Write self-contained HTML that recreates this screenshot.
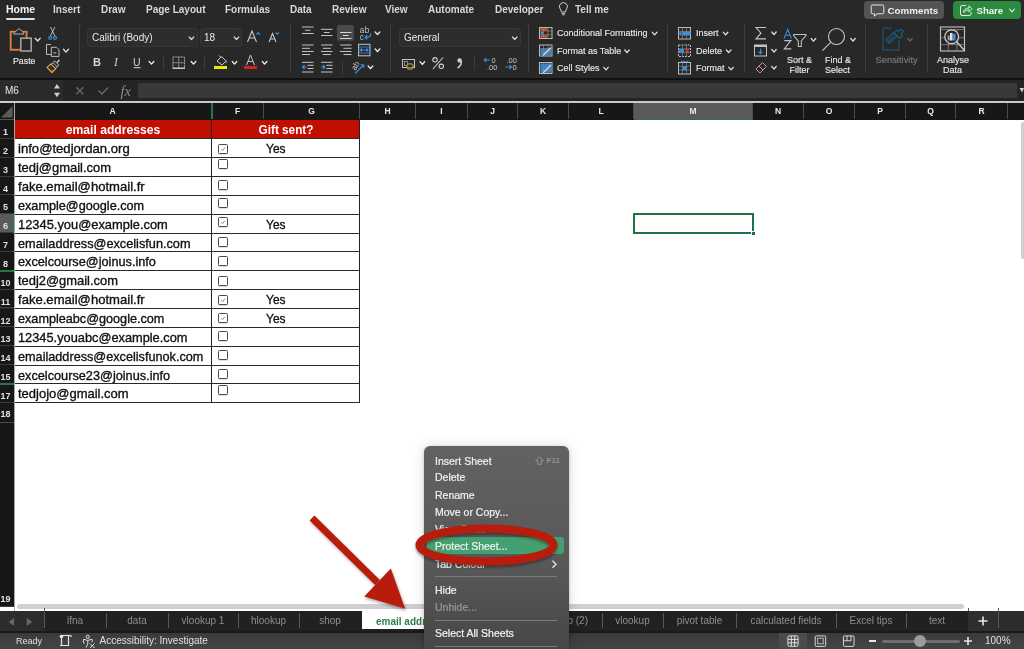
<!DOCTYPE html>
<html><head><meta charset="utf-8">
<style>
*{margin:0;padding:0;box-sizing:border-box}
html,body{width:1024px;height:649px;overflow:hidden;background:#282828;font-family:"Liberation Sans",sans-serif;position:relative}
body{will-change:transform}
.a{position:absolute;white-space:pre}
.tab{position:absolute;top:4px;font-size:10px;font-weight:700;color:#d8d8d8;line-height:12px}
.rb{position:absolute;background:#3d3d3d;width:1px}
.chev{position:absolute;width:5px;height:5px;border-right:1.3px solid #ddd;border-bottom:1.3px solid #ddd;transform:rotate(45deg)}
.lbl{position:absolute;font-size:9px;color:#e6e6e6;line-height:10px;white-space:pre;-webkit-text-stroke:0.15px currentColor}
.colh{position:absolute;top:103px;height:16px;background:#171717;border-right:1px solid #4a4a4a;color:#e8e8e8;font-size:8.5px;font-weight:700;text-align:center;line-height:16px}
.rowh{position:absolute;left:0;width:14px;background:#171717;border-bottom:1px solid #3c3c3c}
.rnum{position:absolute;left:0;width:11px;text-align:center;font-size:9px;font-weight:700;color:#e0e0e0;line-height:10px}
.cell{position:absolute;font-size:13px;color:#111;line-height:15px;white-space:pre;-webkit-text-stroke:0.35px #111}
.cb{position:absolute;left:218px;width:10.3px;height:10px;border:1px solid #4a4a4a;border-radius:1.5px;background:#fff;box-shadow:0 0.5px 0.5px rgba(0,0,0,.25)}
.hl{position:absolute;left:14px;width:346px;height:1px;background:#2a2a2a}
.st{position:absolute;top:611px;height:20px;color:#8e8e8e;font-size:10px;text-align:center;line-height:20px;white-space:pre}
.mi{position:absolute;left:435px;font-size:10.5px;color:#f0f0f0;line-height:12px;white-space:pre;-webkit-text-stroke:0.2px currentColor}
</style></head><body>
<!-- top tab bar -->
<div class="tab" style="left:6px;top:3px;color:#f2f2f2;font-size:10.5px">Home</div>
<div class="a" style="left:6px;top:17.5px;width:29px;height:2px;background:#e0e0e0;border-radius:1px"></div>
<div class="tab" style="left:53px">Insert</div>
<div class="tab" style="left:101px">Draw</div>
<div class="tab" style="left:146px">Page Layout</div>
<div class="tab" style="left:225px">Formulas</div>
<div class="tab" style="left:290px">Data</div>
<div class="tab" style="left:332px">Review</div>
<div class="tab" style="left:385px">View</div>
<div class="tab" style="left:428px">Automate</div>
<div class="tab" style="left:495px">Developer</div>
<div class="tab" style="left:575px">Tell me</div>

<!-- Comments / Share -->
<div class="a" style="left:864px;top:1px;width:80px;height:18px;background:#535353;border-radius:4px"></div>
<div class="a" style="left:887.5px;top:4.5px;font-size:9.8px;font-weight:700;color:#efefef;line-height:12px">Comments</div>
<div class="a" style="left:953px;top:1px;width:68px;height:18px;background:#2b8a3e;border-radius:4px"></div>
<div class="a" style="left:976.5px;top:4.5px;font-size:9.6px;font-weight:700;color:#f4f4f4;line-height:12px">Share</div>

<!-- ribbon separators -->
<div class="rb" style="left:79px;top:24px;height:49px"></div>
<div class="rb" style="left:290px;top:24px;height:49px"></div>
<div class="rb" style="left:390px;top:24px;height:49px"></div>
<div class="rb" style="left:528px;top:24px;height:49px"></div>
<div class="rb" style="left:667px;top:24px;height:49px"></div>
<div class="rb" style="left:744px;top:24px;height:49px"></div>
<div class="rb" style="left:865px;top:24px;height:49px"></div>
<div class="rb" style="left:927px;top:24px;height:49px"></div>

<!-- ribbon labels -->
<div class="lbl" style="left:13px;top:55.5px;font-size:8.8px">Paste</div>
<div class="a" style="left:87px;top:28px;width:111px;height:19px;background:#2d2d2d;border:1px solid #363636;border-radius:3px"></div>
<div class="a" style="left:92px;top:33px;font-size:10px;color:#e8e8e8;line-height:10px">Calibri (Body)</div>
<div class="a" style="left:200px;top:28px;width:42px;height:19px;background:#2d2d2d;border:1px solid #363636;border-radius:3px"></div>
<div class="a" style="left:204px;top:33px;font-size:10px;color:#e8e8e8;line-height:10px">18</div>
<div class="a" style="left:399px;top:28px;width:122px;height:19px;background:#2d2d2d;border:1px solid #363636;border-radius:3px"></div>
<div class="a" style="left:404px;top:32.7px;font-size:10px;color:#e8e8e8;line-height:10px">General</div>
<div class="lbl" style="left:557px;top:28px">Conditional Formatting</div>
<div class="lbl" style="left:557px;top:46px">Format as Table</div>
<div class="lbl" style="left:557px;top:63px">Cell Styles</div>
<div class="lbl" style="left:696px;top:28px">Insert</div>
<div class="lbl" style="left:696px;top:46px">Delete</div>
<div class="lbl" style="left:696px;top:63px">Format</div>
<div class="lbl" style="left:787px;top:55px">Sort &amp;</div>
<div class="lbl" style="left:789.5px;top:64.7px">Filter</div>
<div class="lbl" style="left:825px;top:55.3px">Find &amp;</div>
<div class="lbl" style="left:825px;top:64.7px">Select</div>
<div class="lbl" style="left:875.5px;top:55.3px;color:#7a7a7a;font-size:9.4px">Sensitivity</div>
<div class="lbl" style="left:937px;top:55px">Analyse</div>
<div class="lbl" style="left:943px;top:64.7px">Data</div>

<!-- under ribbon -->
<div class="a" style="left:0;top:78px;width:1024px;height:2px;background:#121212"></div>
<!-- formula bar -->
<div class="a" style="left:0;top:80px;width:1024px;height:21px;background:#242424"></div>
<div class="a" style="left:0;top:80px;width:63px;height:21px;background:#2a2a2a"></div>
<div class="a" style="left:5px;top:85px;font-size:10px;color:#e6e6e6;line-height:11px">M6</div>
<div class="a" style="left:138px;top:83px;width:879px;height:15px;background:#393939;border-radius:2px 0 0 2px"></div>
<svg class="a" style="left:1018px;top:86px" width="6" height="8"><polygon points="1.5,2 6,2 4,6.5" fill="#cfcfcf"/></svg>
<div class="a" style="left:0;top:101px;width:1024px;height:2px;background:#c9c9c9"></div>

<!-- column headers -->
<div class="a" style="left:0;top:103px;width:1024px;height:17px;background:#171717"></div>
<div class="colh" style="left:14px;width:198px">A</div>
<div class="colh" style="left:212px;width:52px">F</div>
<div class="colh" style="left:264px;width:96px">G</div>
<div class="colh" style="left:360px;width:56px">H</div>
<div class="colh" style="left:416px;width:52px">I</div>
<div class="colh" style="left:468px;width:50px">J</div>
<div class="colh" style="left:518px;width:51px">K</div>
<div class="colh" style="left:569px;width:65px">L</div>
<div class="colh" style="left:634px;width:119px;background:#5a5a5a">M</div>
<div class="colh" style="left:753px;width:51px">N</div>
<div class="colh" style="left:804px;width:51px">O</div>
<div class="colh" style="left:855px;width:51px">P</div>
<div class="colh" style="left:906px;width:50px">Q</div>
<div class="colh" style="left:956px;width:52px">R</div>
<div class="a" style="left:634px;top:118.5px;width:119px;height:1.5px;background:#1f7a45"></div>
<div class="a" style="left:211px;top:103px;width:2px;height:16px;background:#1e7a45"></div>
<div class="a" style="left:0;top:103px;width:14px;height:17px;background:#171717"></div>

<svg class="a" style="left:0;top:0" width="1024" height="80"><path d="M561.3,12 q-0.3,-2 -1.3,-3.3 a4,4 0 1 1 6.8,0 q-1,1.3 -1.3,3.3 z" fill="none" stroke="#d0d0d0" stroke-width="1"/><path d="M561.6,13.6 h3.6 M562.2,14.8 h2.4" stroke="#d0d0d0" stroke-width="0.9"/><path d="M872.5,5 h10 a1.3,1.3 0 0 1 1.3,1.3 v6.2 a1.3,1.3 0 0 1 -1.3,1.3 h-5.5 l-2.5,2.3 v-2.3 h-2 a1.3,1.3 0 0 1 -1.3,-1.3 v-6.2 a1.3,1.3 0 0 1 1.3,-1.3 z" fill="none" stroke="#e8e8e8" stroke-width="1"/><path d="M966,5.5 h-4 a1.5,1.5 0 0 0 -1.5,1.5 v7 a1.5,1.5 0 0 0 1.5,1.5 h7.5 a1.5,1.5 0 0 0 1.5,-1.5 v-2" fill="none" stroke="#e8e8e8" stroke-width="1"/><path d="M963.5,12.5 q0.5,-4.5 5.5,-4.5 v-2.2 l3,3 l-3,3 v-2 q-3.5,0 -5.5,2.7 z" fill="none" stroke="#e8e8e8" stroke-width="1" stroke-linejoin="round"/><polyline points="1009.5,9.0 1012.0,11.8 1014.5,9.0" fill="none" stroke="#e8e8e8" stroke-width="1.1" stroke-linecap="round" stroke-linejoin="round"/><rect x="10.8" y="31.8" width="15.6" height="17.8" fill="none" stroke="#e8773a" stroke-width="1.6"/><rect x="10" y="31" width="17.2" height="19.4" fill="none" stroke="#d9b25a" stroke-width="0.5" opacity="0.6"/><path d="M13.5,34 h10.5 l-1.5,-2.5 l-3.5,-3 l-3.5,3 z" fill="#282828" stroke="#b0b0b0" stroke-width="1"/><rect x="20.8" y="38.2" width="10.4" height="12.8" fill="#282828" stroke="#a8a8a8" stroke-width="1.5"/><polyline points="35.2,38.2 37.7,41.0 40.2,38.2" fill="none" stroke="#e0e0e0" stroke-width="1.3" stroke-linecap="round" stroke-linejoin="round"/><path d="M50.5,27 L55,36.3 M54.8,27 L50.3,36.3" stroke="#c8c8c8" stroke-width="0.9" fill="none"/><circle cx="50.2" cy="37.8" r="1.5" fill="none" stroke="#3a8fd8" stroke-width="1.2"/><circle cx="55" cy="37.8" r="1.5" fill="none" stroke="#3a8fd8" stroke-width="1.2"/><path d="M50.8,54.5 h-4.3 v-10 h4.5" fill="none" stroke="#bdbdbd" stroke-width="1"/><path d="M51.3,47.3 h5.2 l2.5,2.5 v6.6 h-7.7 z" fill="none" stroke="#bdbdbd" stroke-width="1"/><rect x="53.3" y="52" width="3" height="1.6" fill="#888"/><polyline points="63.5,49.3 66.0,52.1 68.5,49.3" fill="none" stroke="#e0e0e0" stroke-width="1.3" stroke-linecap="round" stroke-linejoin="round"/><path d="M47,67.3 L52,72.6 L55.8,68.6 L51,63.8 Z" fill="#3a3020" stroke="#e8b24a" stroke-width="1.1" stroke-linejoin="round"/><path d="M51.3,64.2 L55.5,68.3 L58.8,65 L54.6,60.9 Z" fill="#282828" stroke="#c4c4c4" stroke-width="1"/><path d="M53,62.6 l4.2,4.1" stroke="#c4c4c4" stroke-width="0.8"/><path d="M57,62.5 l2.5,-2.5" stroke="#c4c4c4" stroke-width="1.6"/><circle cx="51.8" cy="70.3" r="0.9" fill="#e05030"/><polyline points="189.2,37.0 191.5,39.5 193.8,37.0" fill="none" stroke="#d8d8d8" stroke-width="1.2" stroke-linecap="round" stroke-linejoin="round"/><polyline points="234.2,37.0 236.5,39.5 238.8,37.0" fill="none" stroke="#d8d8d8" stroke-width="1.2" stroke-linecap="round" stroke-linejoin="round"/><text x="93" y="66" font-family="Liberation Sans" font-weight="700" font-size="11" fill="#d8d8d8">B</text><text x="114" y="66" font-family="Liberation Serif" font-style="italic" font-size="11.5" fill="#d0d0d0">I</text><text x="133" y="66" font-family="Liberation Sans" font-size="10.5" fill="#d0d0d0">U</text><rect x="133.5" y="67.2" width="7" height="1" fill="#d0d0d0"/><polyline points="149.2,61.5 151.5,64.1 153.8,61.5" fill="none" stroke="#e8e8e8" stroke-width="1.4" stroke-linecap="round" stroke-linejoin="round"/><rect x="163" y="56" width="1" height="14" fill="#3d3d3d"/><path d="M173,57 h11.5 v11.5 h-11.5 z M178.75,57 v11.5 M173,62.75 h11.5" fill="none" stroke="#bdbdbd" stroke-width="1" stroke-dasharray="1,0.6"/><rect x="172.6" y="67.5" width="12.4" height="1.4" fill="#d0d0d0"/><polyline points="191.2,61.5 193.5,64.1 195.8,61.5" fill="none" stroke="#e8e8e8" stroke-width="1.4" stroke-linecap="round" stroke-linejoin="round"/><rect x="204" y="56" width="1" height="14" fill="#3d3d3d"/><path d="M217,61 l4.5,-4.5 l4.5,4.5 l-4,4 z" fill="none" stroke="#c8c8c8" stroke-width="1"/><path d="M219,55.5 l2,2" stroke="#c8c8c8" stroke-width="1"/><path d="M225.5,60 q1.5,1.5 0.5,3" stroke="#3a8fd8" stroke-width="1.4" fill="none"/><rect x="214" y="66" width="13" height="3" fill="#f0e800"/><polyline points="232.3,61.5 234.6,64.1 236.8,61.5" fill="none" stroke="#e8e8e8" stroke-width="1.4" stroke-linecap="round" stroke-linejoin="round"/><path d="M246.5,65 l4,-10 l4,10 M248,61.5 h5" fill="none" stroke="#c8c8c8" stroke-width="1"/><rect x="244" y="66" width="13" height="3" fill="#d8201a"/><polyline points="262.4,61.5 264.6,64.1 266.9,61.5" fill="none" stroke="#e8e8e8" stroke-width="1.4" stroke-linecap="round" stroke-linejoin="round"/><path d="M247.5,42 l4.5,-11 l4.5,11 M249.3,38 h5.4" fill="none" stroke="#c8c8c8" stroke-width="1.1"/><polyline points="256.5,34.5 258.3,32.8 260.1,34.5" fill="none" stroke="#3a8fd8" stroke-width="1.1"/><path d="M269,42 l3.5,-8.5 l3.5,8.5 M270.4,39 h4.2" fill="none" stroke="#c8c8c8" stroke-width="1.1"/><polyline points="275.5,32.5 277.3,34.2 279.1,32.5" fill="none" stroke="#3a8fd8" stroke-width="1.1"/><rect x="302.0" y="26.5" width="11.5" height="1" fill="#c4c4c4"/><rect x="305.0" y="29.8" width="5.5" height="1" fill="#c4c4c4"/><rect x="302.0" y="33.0" width="11.5" height="1" fill="#c4c4c4"/><rect x="321.0" y="28.8" width="11.5" height="1" fill="#c4c4c4"/><rect x="324.0" y="32.0" width="5.5" height="1" fill="#c4c4c4"/><rect x="321.0" y="35.0" width="11.5" height="1" fill="#c4c4c4"/><rect x="337" y="25" width="17" height="15.7" rx="2" fill="#4a4a4a"/><rect x="340.0" y="32.0" width="11.5" height="1" fill="#d4d4d4"/><rect x="343.0" y="35.0" width="5.5" height="1" fill="#d4d4d4"/><rect x="340.0" y="38.0" width="11.5" height="1" fill="#d4d4d4"/><rect x="302.0" y="44.5" width="11.5" height="1" fill="#c4c4c4"/><rect x="302.0" y="47.8" width="8" height="1" fill="#c4c4c4"/><rect x="302.0" y="51.0" width="11.5" height="1" fill="#c4c4c4"/><rect x="302.0" y="54.0" width="8" height="1" fill="#c4c4c4"/><rect x="321.0" y="44.5" width="11.5" height="1" fill="#c4c4c4"/><rect x="322.8" y="47.8" width="8" height="1" fill="#c4c4c4"/><rect x="321.0" y="51.0" width="11.5" height="1" fill="#c4c4c4"/><rect x="322.8" y="54.0" width="8" height="1" fill="#c4c4c4"/><rect x="340.0" y="44.5" width="11.5" height="1" fill="#c4c4c4"/><rect x="343.5" y="47.8" width="8" height="1" fill="#c4c4c4"/><rect x="340.0" y="51.0" width="11.5" height="1" fill="#c4c4c4"/><rect x="343.5" y="54.0" width="8" height="1" fill="#c4c4c4"/><rect x="302.0" y="61.8" width="11.5" height="1" fill="#c4c4c4"/><rect x="302.0" y="71.5" width="11.5" height="1" fill="#c4c4c4"/><rect x="307.5" y="64.8" width="6" height="1" fill="#c4c4c4"/><rect x="307.5" y="68.0" width="6" height="1" fill="#c4c4c4"/><path d="M302.5,67 h4 M304.5,65 l-2,2 l2,2" stroke="#3a8fd8" stroke-width="1.2" fill="none"/><rect x="321.0" y="61.8" width="11.5" height="1" fill="#c4c4c4"/><rect x="321.0" y="71.5" width="11.5" height="1" fill="#c4c4c4"/><rect x="326.5" y="64.8" width="6" height="1" fill="#c4c4c4"/><rect x="326.5" y="68.0" width="6" height="1" fill="#c4c4c4"/><path d="M321,67 h4 M323,65 l2,2 l-2,2" stroke="#3a8fd8" stroke-width="1.2" fill="none"/><rect x="342" y="61" width="1" height="13" fill="#3d3d3d"/><text x="359.8" y="33.3" font-family="Liberation Sans" font-size="8.2" fill="#c4c4c4" textLength="9.5">ab</text><text x="359.8" y="39.8" font-family="Liberation Sans" font-size="8.2" fill="#c4c4c4">c</text><path d="M370.5,33.5 q1,4 -5,4 M367.2,35.3 l-2,2.2 l2,2" stroke="#3a8fd8" stroke-width="1.3" fill="none"/><polyline points="375.2,32.0 377.5,34.6 379.8,32.0" fill="none" stroke="#e8e8e8" stroke-width="1.4" stroke-linecap="round" stroke-linejoin="round"/><rect x="358.5" y="44.3" width="11.5" height="11.5" fill="none" stroke="#c4c4c4" stroke-width="1"/><rect x="359" y="47" width="10.5" height="6" fill="none" stroke="#3a8fd8" stroke-width="0.8"/><path d="M360.5,50 h7.5 M362,48.5 l-1.5,1.5 l1.5,1.5 M366.5,48.5 l1.5,1.5 l-1.5,1.5" stroke="#3a8fd8" stroke-width="1.2" fill="none"/><polyline points="375.2,49.0 377.5,51.6 379.8,49.0" fill="none" stroke="#e8e8e8" stroke-width="1.4" stroke-linecap="round" stroke-linejoin="round"/><text x="0" y="0" font-family="Liberation Sans" font-size="8" fill="#c4c4c4" transform="translate(355.5,71) rotate(-60)">ab</text><path d="M355,73.5 l8.5,-8.5 M360.5,64.8 h3.2 v3.2" stroke="#3a8fd8" stroke-width="1.1" fill="none"/><polyline points="368.2,66.0 370.5,68.6 372.8,66.0" fill="none" stroke="#e8e8e8" stroke-width="1.4" stroke-linecap="round" stroke-linejoin="round"/><polyline points="512.5,37.0 514.7,39.5 517.0,37.0" fill="none" stroke="#d8d8d8" stroke-width="1.2" stroke-linecap="round" stroke-linejoin="round"/><rect x="402.5" y="59.5" width="12" height="8" fill="none" stroke="#c4c4c4" stroke-width="1"/><rect x="404.5" y="61.5" width="3" height="4" fill="none" stroke="#aaa" stroke-width="0.7"/><ellipse cx="410" cy="65" rx="3" ry="1.2" fill="#2a2a2a" stroke="#e0b050" stroke-width="0.9"/><path d="M407,65 v3 a3,1.2 0 0 0 6,0 v-3" fill="#2a2a2a" stroke="#e0b050" stroke-width="0.9"/><path d="M407,66.6 a3,1.2 0 0 0 6,0" fill="none" stroke="#e0b050" stroke-width="0.7"/><polyline points="420.1,61.8 422.4,64.4 424.6,61.8" fill="none" stroke="#e8e8e8" stroke-width="1.4" stroke-linecap="round" stroke-linejoin="round"/><circle cx="435" cy="59.8" r="2.2" fill="none" stroke="#d0d0d0" stroke-width="1.1"/><circle cx="441.3" cy="66.3" r="2.2" fill="none" stroke="#d0d0d0" stroke-width="1.1"/><path d="M443,57.5 L433,69" stroke="#d0d0d0" stroke-width="1.1"/><circle cx="459.6" cy="60.4" r="2.2" fill="#d0d0d0"/><path d="M461.2,60.8 q0.8,4.5 -3.6,7.2" stroke="#d0d0d0" stroke-width="1.5" fill="none"/><rect x="474" y="56" width="1" height="14" fill="#3d3d3d"/><text x="491.5" y="63" font-family="Liberation Sans" font-size="7.5" fill="#c8c8c8">0</text><text x="487" y="70" font-family="Liberation Sans" font-size="7.5" fill="#c8c8c8">.00</text><path d="M484,60 h6 M486.3,58 l-2,2 l2,2" stroke="#3a8fd8" stroke-width="1.2" fill="none"/><text x="506.5" y="63" font-family="Liberation Sans" font-size="7.5" fill="#c8c8c8">.00</text><text x="512.5" y="70" font-family="Liberation Sans" font-size="7.5" fill="#c8c8c8">0</text><path d="M505.5,67 h6 M509.5,65 l2,2 l-2,2" stroke="#3a8fd8" stroke-width="1.2" fill="none"/><rect x="539.5" y="27.5" width="12.5" height="11" fill="none" stroke="#bdbdbd" stroke-width="1"/><path d="M543.5,27.5 v11 M548,27.5 v11 M539.5,31 h12.5 M539.5,34.7 h12.5" stroke="#8a8a8a" stroke-width="0.7"/><rect x="540.5" y="28.3" width="7" height="2.2" fill="#e25a2c"/><rect x="540.5" y="31.6" width="2.5" height="2.6" fill="#3a8fd8"/><rect x="540.5" y="35.3" width="7" height="2.3" fill="#e25a2c"/><rect x="539.5" y="45.0" width="12.5" height="11" fill="none" stroke="#bdbdbd" stroke-width="1"/><path d="M543.5,45.0 v11 M548,45.0 v11 M539.5,48.5 h12.5 M539.5,52.2 h12.5" stroke="#8a8a8a" stroke-width="0.7"/><rect x="540.5" y="49.0" width="10.8" height="6.2" fill="#3a8fd8" opacity="0.85"/><path d="M543,55.5 l8,-8" stroke="#d0d0d0" stroke-width="1.6"/><rect x="539.5" y="62.5" width="12.5" height="11" fill="none" stroke="#bdbdbd" stroke-width="1"/><path d="M543.5,62.5 v11 M548,62.5 v11 M539.5,66 h12.5 M539.5,69.7 h12.5" stroke="#8a8a8a" stroke-width="0.7"/><rect x="540.5" y="63.5" width="10.8" height="9.2" fill="#3a8fd8" opacity="0.85"/><path d="M543,73 l8,-8" stroke="#d0d0d0" stroke-width="1.6"/><polyline points="652.4,32.3 654.6,34.9 656.9,32.3" fill="none" stroke="#e0e0e0" stroke-width="1.3" stroke-linecap="round" stroke-linejoin="round"/><polyline points="624.8,50.0 627.0,52.6 629.2,50.0" fill="none" stroke="#e0e0e0" stroke-width="1.3" stroke-linecap="round" stroke-linejoin="round"/><polyline points="603.8,67.3 606.0,69.9 608.2,67.3" fill="none" stroke="#e0e0e0" stroke-width="1.3" stroke-linecap="round" stroke-linejoin="round"/><rect x="678.5" y="27.5" width="12" height="11.5" fill="none" stroke="#bdbdbd" stroke-width="1" stroke-dasharray=""/><path d="M682.5,27.5 v11.5 M686.5,27.5 v11.5 M678.5,31.3 h12 M678.5,35.1 h12" stroke="#8a8a8a" stroke-width="0.7"/><rect x="683" y="31.5" width="7.5" height="3.5" fill="#3a8fd8"/><path d="M679.5,33.2 h4.5 M681.3,31.5 l-1.8,1.7 l1.8,1.7" stroke="#3a8fd8" stroke-width="1.1" fill="none"/><rect x="678.5" y="45.0" width="12" height="11.5" fill="none" stroke="#bdbdbd" stroke-width="1" stroke-dasharray="2,1"/><path d="M682.5,45.0 v11.5 M686.5,45.0 v11.5 M678.5,48.8 h12 M678.5,52.6 h12" stroke="#8a8a8a" stroke-width="0.7"/><rect x="679" y="49.0" width="5" height="3.5" fill="#3a8fd8"/><path d="M685.5,49.0 l3.5,3.5 M689,49.0 l-3.5,3.5" stroke="#e03a2a" stroke-width="1.1"/><rect x="678.5" y="62.5" width="12" height="11.5" fill="none" stroke="#bdbdbd" stroke-width="1" stroke-dasharray=""/><path d="M682.5,62.5 v11.5 M686.5,62.5 v11.5 M678.5,66.3 h12 M678.5,70.1 h12" stroke="#8a8a8a" stroke-width="0.7"/><rect x="682.5" y="66.3" width="4.5" height="4" fill="#3a8fd8"/><path d="M681.5,61.5 h6.5 M681.5,60.5 v2 M688,60.5 v2" stroke="#3a8fd8" stroke-width="0.8"/><polyline points="723.4,32.3 725.6,34.9 727.9,32.3" fill="none" stroke="#e0e0e0" stroke-width="1.3" stroke-linecap="round" stroke-linejoin="round"/><polyline points="726.4,50.0 728.6,52.6 730.9,50.0" fill="none" stroke="#e0e0e0" stroke-width="1.3" stroke-linecap="round" stroke-linejoin="round"/><polyline points="728.8,67.3 731.0,69.9 733.2,67.3" fill="none" stroke="#e0e0e0" stroke-width="1.3" stroke-linecap="round" stroke-linejoin="round"/><path d="M766,27.5 h-10 l5,5.7 l-5,5.7 h10" fill="none" stroke="#c4c4c4" stroke-width="1.1"/><polyline points="771.8,32.0 774.0,34.6 776.2,32.0" fill="none" stroke="#e0e0e0" stroke-width="1.3" stroke-linecap="round" stroke-linejoin="round"/><rect x="754.5" y="45" width="12" height="11" fill="none" stroke="#c4c4c4" stroke-width="1"/><rect x="754.5" y="45" width="12" height="2" fill="#c4c4c4"/><path d="M760.5,48.5 v5 M758.5,51.7 l2,2 l2,-2" stroke="#3a8fd8" stroke-width="1.1" fill="none"/><polyline points="771.8,49.5 774.0,52.1 776.2,49.5" fill="none" stroke="#e0e0e0" stroke-width="1.3" stroke-linecap="round" stroke-linejoin="round"/><path d="M756,69 l6.5,-6.5 l4,4 l-6.5,6.5 z M759,66 l4,4" fill="none" stroke="#d08cb0" stroke-width="1"/><polyline points="771.8,66.5 774.0,69.1 776.2,66.5" fill="none" stroke="#e0e0e0" stroke-width="1.3" stroke-linecap="round" stroke-linejoin="round"/><path d="M784,38.6 L787.7,29.3 L791.4,38.6 M785.3,35.3 H790.1" fill="none" stroke="#3a8fd8" stroke-width="1.1"/><path d="M784.3,40.6 h6.6 l-6.6,8.3 h7" fill="none" stroke="#c4c4c4" stroke-width="1.1"/><path d="M793.6,34.4 h12.4 v1.2 l-4.7,5.3 v5.6 h-3 v-5.6 l-4.7,-5.3 z" fill="none" stroke="#c4c4c4" stroke-width="1.05"/><polyline points="811.2,38.5 813.5,41.1 815.8,38.5" fill="none" stroke="#e0e0e0" stroke-width="1.3" stroke-linecap="round" stroke-linejoin="round"/><circle cx="836.5" cy="36.5" r="8" fill="none" stroke="#c8c8c8" stroke-width="1.1"/><path d="M830.7,42.3 l-8.3,8.3" stroke="#c8c8c8" stroke-width="1.1"/><polyline points="850.8,38.5 853.0,41.1 855.2,38.5" fill="none" stroke="#e0e0e0" stroke-width="1.3" stroke-linecap="round" stroke-linejoin="round"/><path d="M883,28 h8 M883,28 v22 h16 v-10" fill="none" stroke="#1d5a7e" stroke-width="1.1"/><path d="M886,40 l7,-7 l3.5,3.5 l-7,7 z M888,42 l5.5,-5.5" fill="none" stroke="#1d5a7e" stroke-width="1.1"/><path d="M894,33 l3,-3 l1.5,1.5 l2.5,-2.5 l2.5,2.5 l-2.5,2.5 l1.5,1.5 l-3,3 z" fill="none" stroke="#1d5a7e" stroke-width="1.1"/><polyline points="907.8,38.5 910.0,41.1 912.2,38.5" fill="none" stroke="#6a6a6a" stroke-width="1.2" stroke-linecap="round" stroke-linejoin="round"/><rect x="940.5" y="27" width="24" height="24" fill="none" stroke="#c8c8c8" stroke-width="1.1"/><path d="M940.5,29.6 h24 M940.5,37.8 h24 M940.5,44.6 h24 M948.3,29.6 v21.4 M957,29.6 v21.4" stroke="#8a8a8a" stroke-width="0.8"/><circle cx="951.7" cy="36.8" r="6.9" fill="#282828" stroke="#d0d0d0" stroke-width="1.2"/><path d="M956.6,41.7 l8,8.8" stroke="#d0d0d0" stroke-width="1.3"/><rect x="947.6" y="35.5" width="2.2" height="5" fill="#9a9a9a"/><rect x="950" y="33" width="2.6" height="7.5" fill="#e0e0e0"/><rect x="953" y="34" width="2.6" height="6.5" fill="#3a8fd8"/></svg><svg class="a" style="left:0;top:78px" width="150" height="26"><path d="M54,10.5 l3,-4.5 l3,4.5 z M54,14.8 l3,4.5 l3,-4.5 z" fill="#d0d0d0"/><path d="M76.3,9.3 l7,7 M83.3,9.3 l-7,7" stroke="#6a6a6a" stroke-width="1.3"/><path d="M98.5,12.5 l3.5,3.5 l6,-6.5" stroke="#6a6a6a" stroke-width="1.3" fill="none"/><text x="120.5" y="17.5" font-family="Liberation Serif" font-style="italic" font-size="14.5" fill="#8a8a8a">fx</text></svg><!-- grid -->
<div class="a" style="left:14px;top:120px;width:1010px;height:491px;background:#fff"></div>
<div class="a" style="left:14px;top:120px;width:346px;height:19px;background:#c10f02"></div>
<div class="rowh" style="top:120.00px;height:18.85px;background:#171717"></div>
<div class="rnum" style="top:127.00px">1</div>
<div class="hl" style="top:138.35px"></div>
<div class="rowh" style="top:138.85px;height:18.85px;background:#171717"></div>
<div class="rnum" style="top:145.85px">2</div>
<div class="cell" style="left:17.5px;top:141.35px;transform:scaleX(1.0083);transform-origin:0 0">info@tedjordan.org</div>
<div class="cb" style="top:143.50px"></div>
<svg class="a" style="left:218px;top:143.50px" width="10" height="10"><polyline points="3.2,5.2 4.6,6.6 7,3.6" fill="none" stroke="#777" stroke-width="0.9"/></svg>
<div class="cell" style="left:266px;top:141.45px;transform:scaleX(0.92);transform-origin:0 0">Yes</div>
<div class="hl" style="top:157.20px"></div>
<div class="rowh" style="top:157.70px;height:18.85px;background:#171717"></div>
<div class="rnum" style="top:164.70px">3</div>
<div class="cell" style="left:17.5px;top:160.20px;transform:scaleX(0.9957);transform-origin:0 0">tedj@gmail.com</div>
<div class="cb" style="top:159.30px"></div>
<div class="hl" style="top:176.05px"></div>
<div class="rowh" style="top:176.55px;height:18.85px;background:#171717"></div>
<div class="rnum" style="top:183.55px">4</div>
<div class="cell" style="left:17.5px;top:179.05px;transform:scaleX(1.0063);transform-origin:0 0">fake.email@hotmail.fr</div>
<div class="cb" style="top:180.20px"></div>
<div class="hl" style="top:194.90px"></div>
<div class="rowh" style="top:195.40px;height:18.85px;background:#171717"></div>
<div class="rnum" style="top:202.40px">5</div>
<div class="cell" style="left:17.5px;top:197.90px;transform:scaleX(0.9736);transform-origin:0 0">example@google.com</div>
<div class="cb" style="top:197.90px"></div>
<div class="hl" style="top:213.75px"></div>
<div class="rowh" style="top:214.25px;height:18.85px;background:#5a5a5a"></div>
<div class="rnum" style="top:221.25px">6</div>
<div class="cell" style="left:17.5px;top:216.75px;transform:scaleX(0.9907);transform-origin:0 0">12345.you@example.com</div>
<div class="cb" style="top:216.90px"></div>
<svg class="a" style="left:218px;top:216.90px" width="10" height="10"><polyline points="3.2,5.2 4.6,6.6 7,3.6" fill="none" stroke="#777" stroke-width="0.9"/></svg>
<div class="cell" style="left:266px;top:216.85px;transform:scaleX(0.92);transform-origin:0 0">Yes</div>
<div class="hl" style="top:232.60px"></div>
<div class="rowh" style="top:233.10px;height:18.85px;background:#171717"></div>
<div class="rnum" style="top:240.10px">7</div>
<div class="cell" style="left:17.5px;top:235.60px;transform:scaleX(0.9773);transform-origin:0 0">emailaddress@excelisfun.com</div>
<div class="cb" style="top:237.00px"></div>
<div class="hl" style="top:251.45px"></div>
<div class="rowh" style="top:251.95px;height:18.85px;background:#171717"></div>
<div class="rnum" style="top:258.95px">8</div>
<div class="cell" style="left:17.5px;top:254.45px;transform:scaleX(0.9773);transform-origin:0 0">excelcourse@joinus.info</div>
<div class="cb" style="top:255.70px"></div>
<div class="hl" style="top:270.30px"></div>
<div class="rowh" style="top:270.80px;height:18.85px;background:#171717"></div>
<div class="rnum" style="top:277.80px">10</div>
<div class="cell" style="left:17.5px;top:273.30px;transform:scaleX(0.993);transform-origin:0 0">tedj2@gmail.com</div>
<div class="cb" style="top:275.70px"></div>
<div class="hl" style="top:289.15px"></div>
<div class="rowh" style="top:289.65px;height:18.85px;background:#171717"></div>
<div class="rnum" style="top:296.65px">11</div>
<div class="cell" style="left:17.5px;top:292.15px;transform:scaleX(1.0063);transform-origin:0 0">fake.email@hotmail.fr</div>
<div class="cb" style="top:294.50px"></div>
<svg class="a" style="left:218px;top:294.50px" width="10" height="10"><polyline points="3.2,5.2 4.6,6.6 7,3.6" fill="none" stroke="#777" stroke-width="0.9"/></svg>
<div class="cell" style="left:266px;top:292.25px;transform:scaleX(0.92);transform-origin:0 0">Yes</div>
<div class="hl" style="top:308.00px"></div>
<div class="rowh" style="top:308.50px;height:18.85px;background:#171717"></div>
<div class="rnum" style="top:315.50px">12</div>
<div class="cell" style="left:17.5px;top:311.00px;transform:scaleX(0.9727);transform-origin:0 0">exampleabc@google.com</div>
<div class="cb" style="top:313.00px"></div>
<svg class="a" style="left:218px;top:313.00px" width="10" height="10"><polyline points="3.2,5.2 4.6,6.6 7,3.6" fill="none" stroke="#777" stroke-width="0.9"/></svg>
<div class="cell" style="left:266px;top:311.10px;transform:scaleX(0.92);transform-origin:0 0">Yes</div>
<div class="hl" style="top:326.85px"></div>
<div class="rowh" style="top:327.35px;height:18.85px;background:#171717"></div>
<div class="rnum" style="top:334.35px">13</div>
<div class="cell" style="left:17.5px;top:329.85px;transform:scaleX(0.9842);transform-origin:0 0">12345.youabc@example.com</div>
<div class="cb" style="top:331.40px"></div>
<div class="hl" style="top:345.70px"></div>
<div class="rowh" style="top:346.20px;height:18.85px;background:#171717"></div>
<div class="rnum" style="top:353.20px">14</div>
<div class="cell" style="left:17.5px;top:348.70px;transform:scaleX(0.9747);transform-origin:0 0">emailaddress@excelisfunok.com</div>
<div class="cb" style="top:349.70px"></div>
<div class="hl" style="top:364.55px"></div>
<div class="rowh" style="top:365.05px;height:18.85px;background:#171717"></div>
<div class="rnum" style="top:372.05px">15</div>
<div class="cell" style="left:17.5px;top:367.55px;transform:scaleX(0.9781);transform-origin:0 0">excelcourse23@joinus.info</div>
<div class="cb" style="top:368.50px"></div>
<div class="hl" style="top:383.40px"></div>
<div class="rowh" style="top:383.90px;height:18.85px;background:#171717"></div>
<div class="rnum" style="top:390.90px">17</div>
<div class="cell" style="left:17.5px;top:386.40px;transform:scaleX(0.9991);transform-origin:0 0">tedjojo@gmail.com</div>
<div class="cb" style="top:384.60px"></div>
<div class="hl" style="top:402.25px"></div>
<div class="cell" style="left:14px;top:122.2px;width:198px;text-align:center;font-size:13.5px;font-weight:700;color:#fff;-webkit-text-stroke:0;transform:scaleX(0.9)">email addresses</div>
<div class="cell" style="left:212px;top:122px;width:148px;text-align:center;font-size:13px;font-weight:700;color:#fff;-webkit-text-stroke:0;transform:scaleX(0.905)">Gift sent?</div>
<div class="a" style="left:211px;top:120px;width:1px;height:282.75px;background:#222"></div>
<div class="a" style="left:359px;top:120px;width:1px;height:282.75px;background:#222"></div>
<div class="rowh" style="top:402.75px;height:204.25px"></div>
<div class="rnum" style="top:409.25px">18</div>
<div class="a" style="left:0;top:421.60px;width:14px;height:1px;background:#474747"></div>
<div class="rnum" style="top:594px">19</div>
<div class="a" style="left:0;top:607px;width:14px;height:4px;background:#fff"></div>
<div class="a" style="left:0;top:269.80px;width:14px;height:2px;background:#1e7a45"></div>
<div class="a" style="left:0;top:382.90px;width:14px;height:2px;background:#1e7a45"></div>
<div class="a" style="left:13px;top:214.25px;width:2px;height:18.85px;background:#1e7a45"></div>
<div class="a" style="left:14px;top:103px;width:1px;height:508px;background:#a8a8a8"></div>
<svg class="a" style="left:0;top:103px" width="14" height="17"><polygon points="1,14.6 12.6,3 12.6,14.6" fill="#5a5a5a"/></svg>
<div class="a" style="left:0;top:119px;width:14px;height:1px;background:#555"></div>
<div class="a" style="left:633px;top:213px;width:121px;height:21px;border:2px solid #1f7244"></div>
<div class="a" style="left:751px;top:231px;width:5px;height:5px;background:#1f7244;border:1px solid #fff"></div>
<div class="a" style="left:17px;top:603.5px;width:947px;height:5px;background:#cfcfcf;border-radius:3px"></div>
<div class="a" style="left:1021px;top:122px;width:5px;height:137px;background:#cfcfcf;border-radius:2.5px"></div>
<div class="a" style="left:0;top:611px;width:1024px;height:20px;background:#2c2c2c"></div>
<div class="a" style="left:44px;top:611px;width:924px;height:20px;background:#212121"></div>
<div class="a" style="left:0;top:631px;width:1024px;height:2px;background:#1a1a1a"></div>
<svg class="a" style="left:0;top:611px" width="44" height="20"><polygon points="8.6,11 14.1,7 14.1,15" fill="#666"/><polygon points="26.7,7 32.2,11 26.7,15" fill="#666"/></svg>
<div class="a" style="left:44px;top:608px;width:1px;height:20px;background:#575757"></div>
<div class="a" style="left:106px;top:613px;width:1px;height:15px;background:#575757"></div>
<div class="a" style="left:168px;top:613px;width:1px;height:15px;background:#575757"></div>
<div class="a" style="left:238px;top:613px;width:1px;height:15px;background:#575757"></div>
<div class="a" style="left:299px;top:613px;width:1px;height:15px;background:#575757"></div>
<div class="a" style="left:602px;top:613px;width:1px;height:15px;background:#575757"></div>
<div class="a" style="left:663px;top:613px;width:1px;height:15px;background:#575757"></div>
<div class="a" style="left:736px;top:613px;width:1px;height:15px;background:#575757"></div>
<div class="a" style="left:836px;top:613px;width:1px;height:15px;background:#575757"></div>
<div class="a" style="left:906px;top:613px;width:1px;height:15px;background:#575757"></div>
<div class="a" style="left:968px;top:608px;width:1px;height:20px;background:#575757"></div>
<div class="a" style="left:998px;top:608px;width:1px;height:20px;background:#575757"></div>
<div class="st" style="left:44px;width:62px">ifna</div>
<div class="st" style="left:106px;width:62px">data</div>
<div class="st" style="left:168px;width:70px">vlookup 1</div>
<div class="st" style="left:238px;width:61px">hlookup</div>
<div class="st" style="left:299px;width:62px">shop</div>
<div class="st" style="left:602px;width:61px">vlookup</div>
<div class="st" style="left:663px;width:73px">pivot table</div>
<div class="st" style="left:736px;width:100px">calculated fields</div>
<div class="st" style="left:836px;width:70px">Excel tips</div>
<div class="st" style="left:906px;width:62px">text</div>
<div class="st" style="left:520px;width:68px;text-align:right">vlookup (2)</div>
<div class="a" style="left:361.5px;top:609px;width:70px;height:19.5px;background:#fff"></div>
<div class="a" style="left:376px;top:615.5px;font-size:10px;font-weight:700;color:#2e7d4a;line-height:12px">email addresses</div>
<div class="a" style="left:968px;top:611px;width:30px;height:20px;background:#2e2e2e"></div>
<svg class="a" style="left:968px;top:611px" width="30" height="20"><path d="M15,5.5 v9 M10.5,10 h9" stroke="#e8e8e8" stroke-width="1.6"/></svg>
<div class="a" style="left:0;top:633px;width:1024px;height:16px;background:linear-gradient(#3a3a3a,#454545)"></div>
<div class="a" style="left:16px;top:636px;font-size:9px;color:#e0e0e0;line-height:10px">Ready</div>
<svg class="a" style="left:56px;top:633px" width="44" height="16"><circle cx="5.5" cy="3.5" r="1.8" fill="#e8e8e8"/><path d="M7,2.5 h7 q1.5,0 1.2,1.5 M12.5,2.5 v10 h-8 M5.5,5 v7.5 M4,12.5 h7" fill="none" stroke="#e8e8e8" stroke-width="1.2"/>
<circle cx="31.8" cy="3.8" r="1.6" fill="none" stroke="#e0e0e0" stroke-width="1"/><path d="M27.5,6.3 q4.3,2.2 8.6,0 M31.8,7.5 v3.5 l-1.8,3.5 M27.5,6.3 q-0.8,3 0.8,4.5 M36.1,6.3 q0.6,1.5 -0.2,3" fill="none" stroke="#e0e0e0" stroke-width="1"/><path d="M34,10.5 l4.5,4.5 M38.5,10.5 l-4.5,4.5" stroke="#e0e0e0" stroke-width="1"/></svg>
<div class="a" style="left:99.5px;top:636px;font-size:10px;color:#e0e0e0;line-height:10px">Accessibility: Investigate</div>
<div class="a" style="left:779px;top:633px;width:28px;height:16px;background:#4c4c4c"></div>
<svg class="a" style="left:770px;top:631px" width="100" height="18"><rect x="17.9" y="4.9" width="10.2" height="10.4" rx="1.5" fill="none" stroke="#e0e0e0" stroke-width="1"/><path d="M21.3,4.9 v10.4 M24.7,4.9 v10.4 M17.9,8.4 h10.2 M17.9,11.8 h10.2" stroke="#e0e0e0" stroke-width="1"/><rect x="45.2" y="4.9" width="10.5" height="10.5" rx="1" fill="none" stroke="#d8d8d8" stroke-width="1"/><rect x="47.7" y="7.2" width="5.5" height="5.6" fill="none" stroke="#c8c8c8" stroke-width="0.9"/><rect x="73.4" y="4.9" width="10.6" height="10.5" rx="1" fill="none" stroke="#d8d8d8" stroke-width="1"/><path d="M73.4,9.8 h7.6 v-4.9 M77,4.9 v4.9" fill="none" stroke="#d8d8d8" stroke-width="1"/></svg>
<div class="a" style="left:869px;top:640px;width:7px;height:1.5px;background:#e8e8e8"></div>
<div class="a" style="left:882px;top:639.5px;width:78px;height:3px;background:#6e6e6e;border-radius:2px"></div>
<div class="a" style="left:914px;top:635px;width:12px;height:12px;background:#9c9c9c;border-radius:50%"></div>
<svg class="a" style="left:962px;top:635px" width="12" height="12"><path d="M6,2 v8 M2,6 h8" stroke="#e8e8e8" stroke-width="1.6"/></svg>
<div class="a" style="left:985px;top:636px;font-size:10px;color:#e0e0e0;line-height:10px">100%</div>
<svg class="a" style="left:0;top:0" width="1024" height="649">
<defs><filter id="sh" x="-20%" y="-20%" width="140%" height="140%"><feDropShadow dx="1" dy="2" stdDeviation="1.5" flood-color="#000" flood-opacity="0.35"/></filter></defs>
<g filter="url(#sh)" fill="#b71c0c">
<polygon points="314.4,515.5 379.9,580 375.1,585 309.6,520.5"/>
<polygon points="390.8,568.6 405.2,608.7 364.2,596.5"/>
</g></svg>
<div class="a" style="left:424px;top:446px;width:145px;height:210px;background:linear-gradient(#626262,#575757 60%,#454545);border-radius:6px;box-shadow:0 0 14px rgba(0,0,0,.13),0 1px 3px rgba(0,0,0,.25)"></div>
<div class="a" style="left:427px;top:537px;width:137px;height:17px;background:#44a070;border-radius:3px"></div>
<div class="mi" style="top:454.5px;color:#f2f2f2">Insert Sheet</div>
<div class="mi" style="top:471.2px;color:#f2f2f2">Delete</div>
<div class="mi" style="top:488.6px;color:#f2f2f2">Rename</div>
<div class="mi" style="top:506.1px;color:#f2f2f2">Move or Copy...</div>
<div class="mi" style="top:522.5px;color:#f2f2f2">View Code</div>
<div class="mi" style="top:540.2px;color:#f2f2f2">Protect Sheet...</div>
<div class="mi" style="top:558.1px;color:#f2f2f2">Tab Colour</div>
<div class="mi" style="top:583.5px;color:#f2f2f2">Hide</div>
<div class="mi" style="top:600.9px;color:#9a9a9a">Unhide...</div>
<div class="mi" style="top:626.9px;color:#f2f2f2">Select All Sheets</div>
<svg class="a" style="left:535px;top:456px" width="10" height="10"><path d="M4.5,0.8 L8.3,4.8 H6.3 V8.3 H2.7 V4.8 H0.7 Z" fill="none" stroke="#9a9a9a" stroke-width="0.9"/></svg>
<div class="a" style="left:546.5px;top:457px;font-size:8px;font-weight:700;color:#929292;line-height:8px">F11</div>
<svg class="a" style="left:550.5px;top:558.5px" width="8" height="12"><polyline points="1.5,1.7 5,5.2 1.5,8.7" fill="none" stroke="#e8e8e8" stroke-width="1.3"/></svg>
<div class="a" style="left:435px;top:576px;width:122px;height:1px;background:#7a7a7a"></div>
<div class="a" style="left:435px;top:619.5px;width:122px;height:1px;background:#7a7a7a"></div>
<div class="a" style="left:435px;top:645.5px;width:122px;height:1px;background:#7a7a7a"></div>
<svg class="a" style="left:0;top:0" width="1024" height="649">
<defs><filter id="sh2" x="-20%" y="-50%" width="140%" height="200%"><feDropShadow dx="0" dy="2" stdDeviation="1.5" flood-color="#000" flood-opacity="0.4"/></filter></defs>
<ellipse cx="486.5" cy="545" rx="67" ry="16.5" fill="none" stroke="#b81c0e" stroke-width="8" filter="url(#sh2)"/>
</svg>
</body></html>
